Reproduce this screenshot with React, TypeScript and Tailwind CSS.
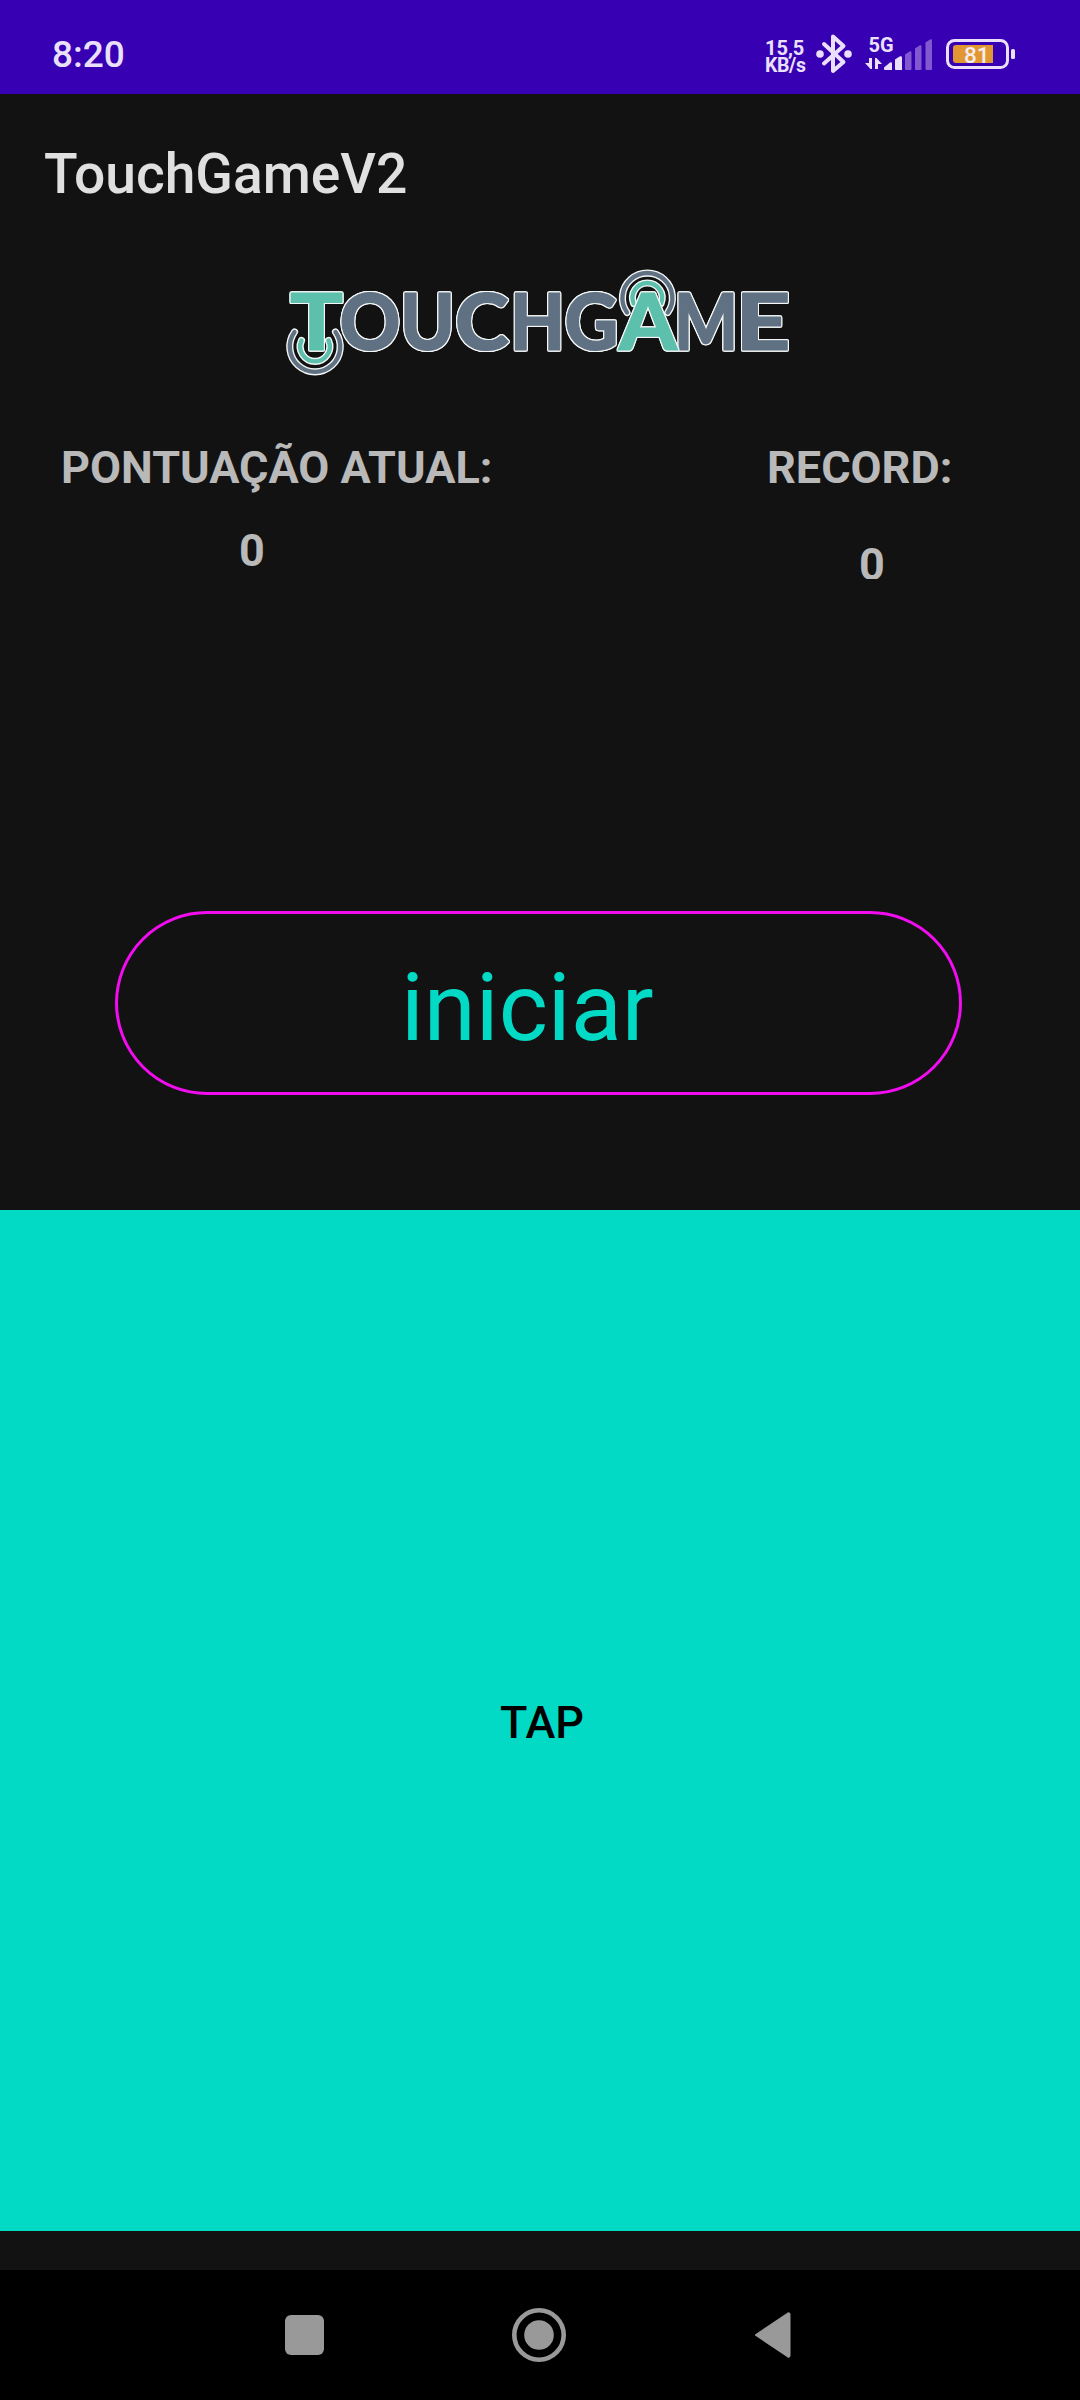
import React from "react";

const SLATE = "#5f7183";
const MINT = "#5cc0ad";

const LETTERS = [
  { ch: "T", x: 290, w: 53, color: MINT },
  { ch: "O", x: 339.5, w: 61, color: SLATE },
  { ch: "U", x: 400, w: 55, color: SLATE },
  { ch: "C", x: 455, w: 54, color: SLATE },
  { ch: "H", x: 510, w: 55, color: SLATE },
  { ch: "G", x: 564.5, w: 54, color: SLATE },
  { ch: "M", x: 674, w: 64, color: SLATE },
  { ch: "E", x: 735.5, w: 55, color: SLATE },
  { ch: "A", x: 619, w: 58, color: MINT },
];

function Ring({ d, color }: { d: string; color: string }) {
  return (
    <g fill="none" strokeLinecap="round">
      <path d={d} stroke="#f4f7f6" strokeWidth="7.2" />
      <path d={d} stroke={color} strokeWidth="4.4" />
    </g>
  );
}

function Logo() {
  return (
    <svg className="block h-[120px] w-[520px]" viewBox="280 260 520 120" role="img" aria-label="TouchGame">
      <Ring d="M294.5 332 A25.2 25.2 0 1 0 335.5 332" color={SLATE} />
      <Ring d="M301.5 340.5 A14.8 14.8 0 1 0 328.5 340.5" color={MINT} />
      <Ring d="M627 312.5 A25 25 0 1 1 667.8 312.5" color={SLATE} />
      <Ring d="M633.7 303.5 A14.8 14.8 0 1 1 661 303.5" color={MINT} />
      {LETTERS.map((l) => (
        <text
          key={l.ch}
          x={l.x}
          y="349.5"
          textLength={l.w}
          lengthAdjust="spacingAndGlyphs"
          fontFamily="Lato, sans-serif"
          fontWeight="900"
          fontSize="79"
          fill={l.color}
          stroke={l.color}
          strokeWidth="1.2"
          strokeLinejoin="round"
          className="[filter:drop-shadow(1px_0_0_#f4f7f6)_drop-shadow(-1px_0_0_#f4f7f6)_drop-shadow(0_1px_0_#f4f7f6)_drop-shadow(0_-1px_0_#f4f7f6)]"
        >
          {l.ch}
        </text>
      ))}
    </svg>
  );
}

function StatusIcons() {
  return (
    <svg className="block h-[94px] w-[204px]" viewBox="812 0 204 94">
      <g fill="none" stroke="#ebe0fb" strokeWidth="4" strokeLinejoin="round" strokeLinecap="round">
        <path d="M824 44 L843.5 62 L833 71 V36.5 L843.5 46 L824 63.5" />
      </g>
      <circle cx="820" cy="54" r="3.8" fill="#ebe0fb" />
      <circle cx="848" cy="54" r="3.8" fill="#ebe0fb" />
      <text x="868.5" y="52" fontFamily="Roboto, sans-serif" fontWeight="700" fontSize="20" fill="#ebe0fb">5G</text>
      <g fill="#ebe0fb">
        <path d="M869 58 h3 v11 h-1.5 l-5.500 -6 h4z" />
        <path d="M875 58 h1.500 l5.500 6 h-4 v5 h-3z" />
        <path d="M884 67.5 L890 62.5 Q892 61.5 892 63.5 V70 H885 Q884 70 884 69z" />
        <path d="M895 59.500 L899.5 56.5 Q902 55.5 902 57.5 V70 H896 Q895 70 895 69z" />
      </g>
      <g fill="#8258d0">
        <path d="M905 54.500 L909.500 51.500 Q911.500 50.500 911.500 52.500 V69 Q911.500 70 910.500 70 H906 Q905 70 905 69z" />
        <path d="M915 48.500 L919.500 45.5 Q921.500 44.5 921.500 46.5 V69 Q921.500 70 920.500 70 H916 Q915 70 915 69z" />
        <path d="M925.5 42.500 L930 39.5 Q932 38.5 932 40.5 V69 Q932 70 931 70 H926.5 Q925.5 70 925.5 69z" />
      </g>
      <rect x="947.5" y="40.5" width="60" height="27" rx="7" fill="none" stroke="#ebe0fb" strokeWidth="3" />
      <path d="M956 45 H993 V63 H956 Q953 63 953 60 V48 Q953 45 956 45z" fill="#e19833" />
      <rect x="1011" y="49" width="4" height="10" rx="1.5" fill="#ebe0fb" />
      <text x="964" y="63" fontFamily="Roboto, sans-serif" fontWeight="500" fontSize="22.5" fill="#f6ecf0">81</text>
    </svg>
  );
}

function StatusBar() {
  return (
    <header className="flex h-[94px] justify-between bg-[#3700b3] pr-16 pl-[52px] text-[#ebe0fb]">
      <span className="pt-[33px] text-[37px] leading-[44px] font-medium">8:20</span>
      <div className="flex">
        <div className="w-[47px] pt-[39px] text-[20px] leading-[18px] font-bold">
          <div>15,5</div>
          <div className="text-[19.5px] tracking-[-0.4px]">KB/s</div>
        </div>
        <StatusIcons />
      </div>
    </header>
  );
}

function NavBar() {
  return (
    <nav className="flex h-[130px] items-center bg-black pl-[285px]">
      <div className="h-10 w-[39px] rounded-[6px] bg-[#999]" />
      <svg className="ml-[188px] block size-[54px]" viewBox="0 0 54 54">
        <circle cx="27" cy="27" r="24.7" fill="none" stroke="#999" strokeWidth="4.6" />
        <circle cx="27" cy="27" r="14.8" fill="#999" />
      </svg>
      <svg className="ml-[188px] block h-[46px] w-[37px]" viewBox="0 0 37 46">
        <path d="M34 1.5 L2 23 L34 44.5 Q35.5 45 35.5 43.5 V2.5 Q35.5 1 34 1.5z" fill="#999" stroke="#999" strokeWidth="2" strokeLinejoin="round" />
      </svg>
    </nav>
  );
}

export default function App() {
  return (
    <div className="flex h-[2400px] w-[1080px] flex-col overflow-hidden bg-[#121212] font-[Roboto,sans-serif]">
      <StatusBar />
      <h1 className="h-[166px] pt-[48px] pl-11 text-[55.2px] leading-[64px] font-medium text-[#e0e0e0]">TouchGameV2</h1>
      <div className="pl-[280px]">
        <Logo />
      </div>
      <section className="flex h-[531px] justify-between pt-[61px] text-[45px] leading-[53px] font-bold text-[#b9b9b9]">
        <div className="pl-[61px]">
          <div>PONTUAÇÃO ATUAL:</div>
          <div className="mt-[30px] pl-[178px]">0</div>
        </div>
        <div className="w-[313px]">
          <div>RECORD:</div>
          <div className="mt-[44px] h-[41px] overflow-hidden pl-[92px]">0</div>
        </div>
      </section>
      <button className="ml-[115px] block h-[184px] w-[847px] shrink-0 rounded-[92px] border-[3px] border-[#f20cf0] pt-[9px] pl-[283px] text-left text-[94px] leading-[112px] font-normal text-[#03dac5]">
        iniciar
      </button>
      <button className="mt-[115px] block h-[1021px] shrink-0 bg-[#03dac5] pt-1 pl-1 text-[45px] font-medium text-black">TAP</button>
      <div className="flex-1" />
      <NavBar />
    </div>
  );
}
